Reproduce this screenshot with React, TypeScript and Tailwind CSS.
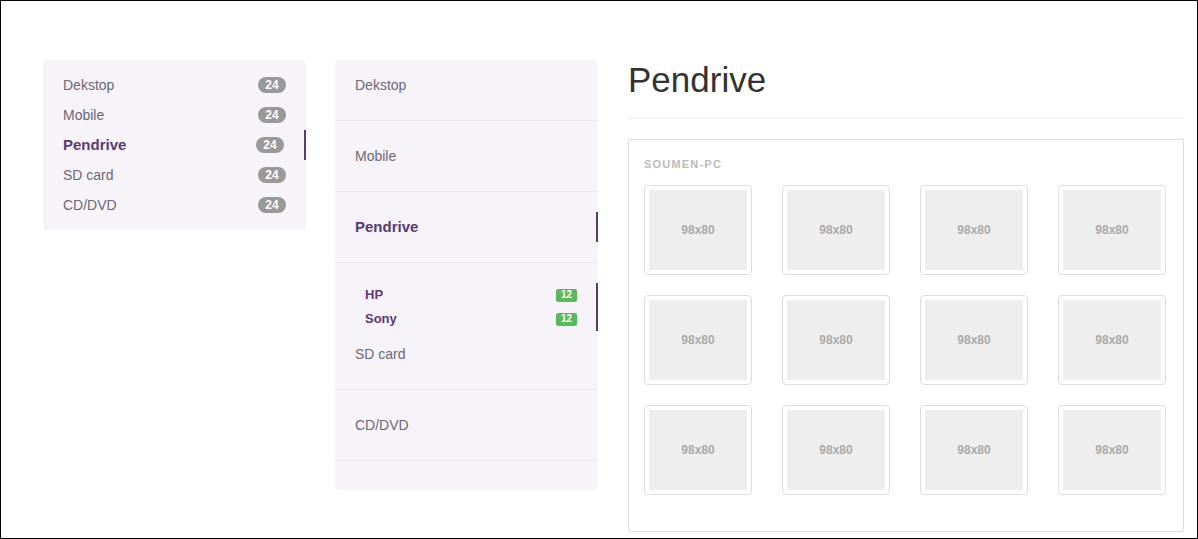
const categories = ["Dekstop", "Mobile", "Pendrive", "SD card", "CD/DVD"];
const active = "Pendrive";

const subItems = [
  { name: "HP", count: 12 },
  { name: "Sony", count: 12 },
];

function SideList() {
  return (
    <div className="w-[263px] shrink-0 self-start rounded-[4px] bg-[#f6f4f9] pt-[10px] pb-[10px]">
      {categories.map((c) => (
        <div
          key={c}
          className={`flex h-[30px] items-center justify-between pl-[20px] pr-[20px] ${
            c === active ? "border-r-2 border-[#5b3a73]" : ""
          }`}
        >
          <span
            className={
              c === active
                ? "text-[15px] font-bold text-[#5b3a73]"
                : "text-[14px] text-[#6d6875]"
            }
          >
            {c}
          </span>
          <span className="flex h-[16px] w-[28px] items-center justify-center rounded-full bg-[#999] text-[12px] font-bold leading-none text-white">
            24
          </span>
        </div>
      ))}
    </div>
  );
}

function Accordion() {
  return (
    <div className="w-[263px] shrink-0 self-start rounded-[4px] bg-[#f6f4f9] pb-[29px]">
      <div className="border-b border-[#ebe7ef] pt-[10px] pb-[20px] pl-[20px]">
        <div className="h-[30px] text-[14px] leading-[30px] text-[#6d6875]">Dekstop</div>
      </div>
      <div className="border-b border-[#ebe7ef] py-[20px] pl-[20px]">
        <div className="h-[30px] text-[14px] leading-[30px] text-[#6d6875]">Mobile</div>
      </div>
      <div className="border-b border-[#ebe7ef] py-[20px]">
        <div className="h-[30px] border-r-2 border-[#5b3a73] pl-[20px] text-[15px] font-bold leading-[30px] text-[#5b3a73]">
          Pendrive
        </div>
      </div>
      <div className="border-b border-[#ebe7ef] pt-[20px] pb-[20px]">
        <div className="border-r-2 border-[#5b3a73] pr-[19px] pl-[30px]">
          {subItems.map((s) => (
            <div key={s.name} className="flex h-[24px] items-center justify-between">
              <span className="text-[13px] font-bold text-[#5b3a73]">{s.name}</span>
              <span className="flex h-[13px] w-[21px] items-center justify-center rounded-[2px] bg-[#5cb85c] text-[10px] font-bold leading-none text-white">
                {s.count}
              </span>
            </div>
          ))}
        </div>
        <div className="mt-[8px] h-[30px] pl-[20px] text-[14px] leading-[30px] text-[#6d6875]">SD card</div>
      </div>
      <div className="border-b border-[#ebe7ef] py-[20px] pl-[20px]">
        <div className="h-[30px] text-[14px] leading-[30px] text-[#6d6875]">CD/DVD</div>
      </div>
    </div>
  );
}

function Thumb() {
  return (
    <div className="h-[90px] w-[108px] rounded-[4px] border border-[#ddd] bg-white p-[4px]">
      <div className="flex h-[80px] w-[98px] items-center justify-center bg-[#eee] text-[12px] font-bold text-[#aaa]">
        98x80
      </div>
    </div>
  );
}

export default function App() {
  return (
    <div
      className="h-[539px] w-[1198px] overflow-hidden border border-black bg-white"
      style={{ fontFamily: '"Liberation Sans", Arial, sans-serif' }}
    >
      <div className="flex pt-[59px] pl-[42px]">
        <SideList />
        <div className="ml-[29px]">
          <Accordion />
        </div>
        <div className="ml-[30px] w-[556px]">
          <h1 className="h-[40px] text-[35px] leading-[40px] text-[#333]">Pendrive</h1>
          <div className="mt-[18px] border-t border-[#eee]" />
          <div className="mt-[20px] h-[393px] rounded-[2px] border border-[#ddd] pt-[17px] pl-[15px]">
            <div className="text-[11px] font-bold leading-[14px] tracking-[1.2px] text-[#bbb]">SOUMEN-PC</div>
            <div className="mt-[14px] grid grid-cols-[108px_108px_108px_108px] gap-x-[30px] gap-y-[20px]">
              {Array.from({ length: 12 }).map((_, i) => (
                <Thumb key={i} />
              ))}
            </div>
          </div>
        </div>
      </div>
    </div>
  );
}
